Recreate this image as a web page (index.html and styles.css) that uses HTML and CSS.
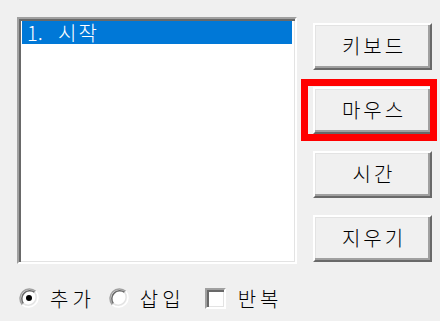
FILE: index.html
```html
<!DOCTYPE html>
<html lang="ko">
<head>
<meta charset="utf-8">
<link rel="stylesheet" href="styles.css">
</head>
<body>
<div class="window">
  <div class="main">
    <div class="listbox">
      <div class="item selected"><span class="num">1.</span><span class="label">시작</span></div>
    </div>
    <div class="buttons">
      <button class="btn">키보드</button>
      <button class="btn">마우스</button>
      <button class="btn">시간</button>
      <button class="btn">지우기</button>
    </div>
  </div>
  <div class="options">
    <label class="opt">
      <svg class="radio" width="20" height="20" viewBox="0 0 20 20">
        <circle cx="10" cy="10" r="8" fill="#fff"/>
        <path d="M3.3 16.7 A9.5 9.5 0 0 1 16.7 3.3" fill="none" stroke="#a0a0a0" stroke-width="1.5"/>
        <path d="M4.4 15.6 A8 8 0 0 1 15.6 4.4" fill="none" stroke="#696969" stroke-width="1.5"/>
        <path d="M16.7 3.3 A9.5 9.5 0 0 1 3.3 16.7" fill="none" stroke="#ffffff" stroke-width="1.5"/>
        <path d="M15.6 4.4 A8 8 0 0 1 4.4 15.6" fill="none" stroke="#e3e3e3" stroke-width="1.5"/>
        <circle cx="10" cy="10" r="3" fill="#000"/>
      </svg>
      <span class="opt-text">추가</span>
    </label>
    <label class="opt">
      <svg class="radio" width="20" height="20" viewBox="0 0 20 20">
        <circle cx="10" cy="10" r="8" fill="#fff"/>
        <path d="M3.3 16.7 A9.5 9.5 0 0 1 16.7 3.3" fill="none" stroke="#a0a0a0" stroke-width="1.5"/>
        <path d="M4.4 15.6 A8 8 0 0 1 15.6 4.4" fill="none" stroke="#696969" stroke-width="1.5"/>
        <path d="M16.7 3.3 A9.5 9.5 0 0 1 3.3 16.7" fill="none" stroke="#ffffff" stroke-width="1.5"/>
        <path d="M15.6 4.4 A8 8 0 0 1 4.4 15.6" fill="none" stroke="#e3e3e3" stroke-width="1.5"/>
      </svg>
      <span class="opt-text">삽입</span>
    </label>
    <label class="opt check-opt">
      <span class="checkbox"></span>
      <span class="opt-text">반복</span>
    </label>
  </div>
  <div class="highlight"></div>
</div>
</body>
</html>
```

FILE: styles.css
```css
html, body {
  margin: 0;
  padding: 0;
  background: #f0f0f0;
}

.window {
  position: relative;
  width: 440px;
  height: 321px;
  font-family: "Noto Sans CJK KR", "Noto Sans", sans-serif;
  font-size: 20px;
  font-weight: 300;
  color: #000;
}

.main {
  display: flex;
  padding: 17px 0 0 17px;
}

.listbox {
  box-sizing: border-box;
  width: 280px;
  height: 247px;
  background: #fff;
  border-style: solid;
  border-width: 2px;
  border-color: #a0a0a0 #ffffff #ffffff #a0a0a0;
  box-shadow: inset 2px 2px 0 #696969, inset -1px -1px 0 #e3e3e3;
  padding: 2px 3px;
}

.item {
  height: 23px;
  line-height: 23px;
  display: flex;
  align-items: center;
  padding-left: 5px;
}

.item.selected {
  background: #0078d7;
  color: #fff;
}

.item .num {
  width: 31px;
}

.item .label {
  letter-spacing: 2px;
}

.buttons {
  display: flex;
  flex-direction: column;
  gap: 17px;
  margin-left: 16px;
  padding-top: 6px;
}

.btn {
  box-sizing: border-box;
  width: 119px;
  height: 47px;
  background: #f0f0f0;
  font-family: "Noto Sans CJK KR", "Noto Sans", sans-serif;
  font-size: 20px;
  font-weight: 300;
  letter-spacing: 3px;
  color: #000;
  border-style: solid;
  border-width: 2px;
  border-color: #ffffff #696969 #696969 #ffffff;
  box-shadow: inset -2px -2px 0 #a0a0a0, inset 1px 1px 0 #e3e3e3;
  padding: 0 0 3px 3px;
  margin: 0;
}

.options {
  display: flex;
  align-items: center;
  margin-top: 23px;
  padding-left: 19px;
  height: 22px;
}

.opt {
  display: flex;
  align-items: center;
  gap: 11px;
  margin-right: 14px;
}

.opt-text {
  letter-spacing: 4px;
}

.check-opt {
  margin-left: 6px;
  gap: 12px;
}

.radio {
  display: block;
}

.checkbox {
  box-sizing: border-box;
  width: 21px;
  height: 21px;
  background: #fff;
  border-style: solid;
  border-width: 2px;
  border-color: #a0a0a0 #ffffff #ffffff #a0a0a0;
  box-shadow: inset 2px 2px 0 #696969, inset -1px -1px 0 #e3e3e3;
}

.highlight {
  position: absolute;
  left: 301px;
  top: 79px;
  width: 136px;
  height: 62px;
  box-sizing: border-box;
  border: 7px solid #ff0000;
}
```
